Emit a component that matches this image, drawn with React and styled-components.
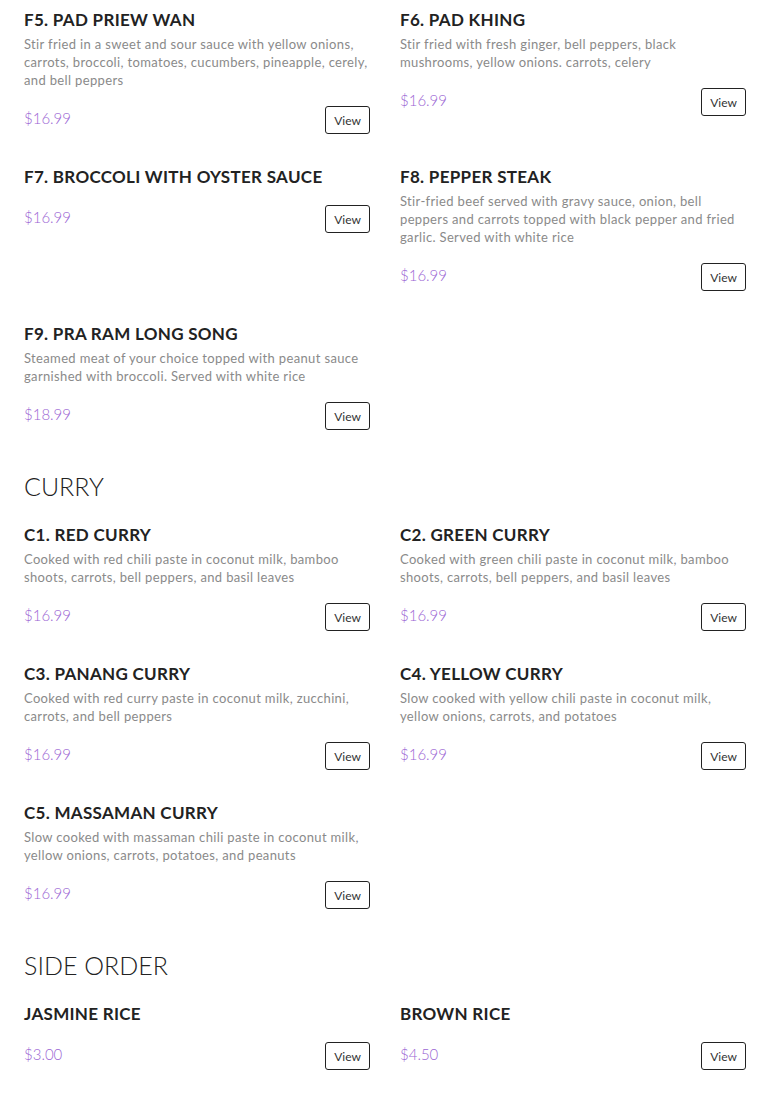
import styled, { createGlobalStyle } from "styled-components"

const GlobalStyle = createGlobalStyle`
  body {
    margin: 0;
    background: #fff;
    font-family: "Lato", "Noto Sans", sans-serif;
  }
`;

const Page = styled.div`
  padding: 8px 24px 20px;
  display: flex;
  flex-direction: column;
  gap: 38px;
`;

const Section = styled.section`
  display: flex;
  flex-direction: column;
  gap: 19px;
`;

const Heading = styled.h2`
  margin: 0;
  font-size: 25px;
  line-height: 36px;
  font-weight: 300;
  color: #222;
`;

const Grid = styled.div`
  display: grid;
  grid-template-columns: 346px 346px;
  column-gap: 30px;
  row-gap: 31px;
  align-items: start;
`;

const Item = styled.div`
  display: flex;
  flex-direction: column;
`;

const Title = styled.h3`
  margin: 0;
  font-size: 17px;
  line-height: 24px;
  font-weight: 700;
  color: #222;
  letter-spacing: 0.3px;
`;

const Desc = styled.p`
  margin: 3px 0 1px;
  font-size: 13px;
  line-height: 18px;
  font-weight: 400;
  color: #8a8a8a;
  letter-spacing: 0.35px;
`;

const Footer = styled.div`
  margin-top: 16px;
  display: flex;
  align-items: center;
  justify-content: space-between;
`;

const Price = styled.span`
  font-size: 15px;
  font-weight: 300;
  color: #9b66d4;
  padding-bottom: 4px;
`;

const ViewButton = styled.button`
  height: 28px;
  width: 45px;
  padding: 0;
  border: 1px solid #222;
  border-radius: 3px;
  background: #fff;
  font-family: inherit;
  font-size: 12px;
  font-weight: 400;
  color: #333;
  cursor: pointer;
`;

const menu = [
  {
    items: [
      { name: "F5. PAD PRIEW WAN", desc: "Stir fried in a sweet and sour sauce with yellow onions, carrots, broccoli, tomatoes, cucumbers, pineapple, cerely, and bell peppers", price: "$16.99" },
      { name: "F6. PAD KHING", desc: "Stir fried with fresh ginger, bell peppers, black mushrooms, yellow onions. carrots, celery", price: "$16.99" },
      { name: "F7. BROCCOLI WITH OYSTER SAUCE", price: "$16.99" },
      { name: "F8. PEPPER STEAK", desc: "Stir-fried beef served with gravy sauce, onion, bell peppers and carrots topped with black pepper and fried garlic. Served with white rice", price: "$16.99" },
      { name: "F9. PRA RAM LONG SONG", desc: "Steamed meat of your choice topped with peanut sauce garnished with broccoli. Served with white rice", price: "$18.99" },
    ],
  },
  {
    title: "CURRY",
    items: [
      { name: "C1. RED CURRY", desc: "Cooked with red chili paste in coconut milk, bamboo shoots, carrots, bell peppers, and basil leaves", price: "$16.99" },
      { name: "C2. GREEN CURRY", desc: "Cooked with green chili paste in coconut milk, bamboo shoots, carrots, bell peppers, and basil leaves", price: "$16.99" },
      { name: "C3. PANANG CURRY", desc: "Cooked with red curry paste in coconut milk, zucchini, carrots, and bell peppers", price: "$16.99" },
      { name: "C4. YELLOW CURRY", desc: "Slow cooked with yellow chili paste in coconut milk, yellow onions, carrots, and potatoes", price: "$16.99" },
      { name: "C5. MASSAMAN CURRY", desc: "Slow cooked with massaman chili paste in coconut milk, yellow onions, carrots, potatoes, and peanuts", price: "$16.99" },
    ],
  },
  {
    title: "SIDE ORDER",
    items: [
      { name: "JASMINE RICE", price: "$3.00" },
      { name: "BROWN RICE", price: "$4.50" },
    ],
  },
]

function MenuItem({ item }) {
  return (
    <Item>
      <Title>{item.name}</Title>
      {item.desc && <Desc>{item.desc}</Desc>}
      <Footer>
        <Price>{item.price}</Price>
        <ViewButton>View</ViewButton>
      </Footer>
    </Item>
  )
}

export default function App() {
  return (
    <>
      <GlobalStyle />
      <Page>
        {menu.map((section, i) => (
          <Section key={i}>
            {section.title && <Heading>{section.title}</Heading>}
            <Grid>
              {section.items.map(item => (
                <MenuItem key={item.name} item={item} />
              ))}
            </Grid>
          </Section>
        ))}
      </Page>
    </>
  )
}
